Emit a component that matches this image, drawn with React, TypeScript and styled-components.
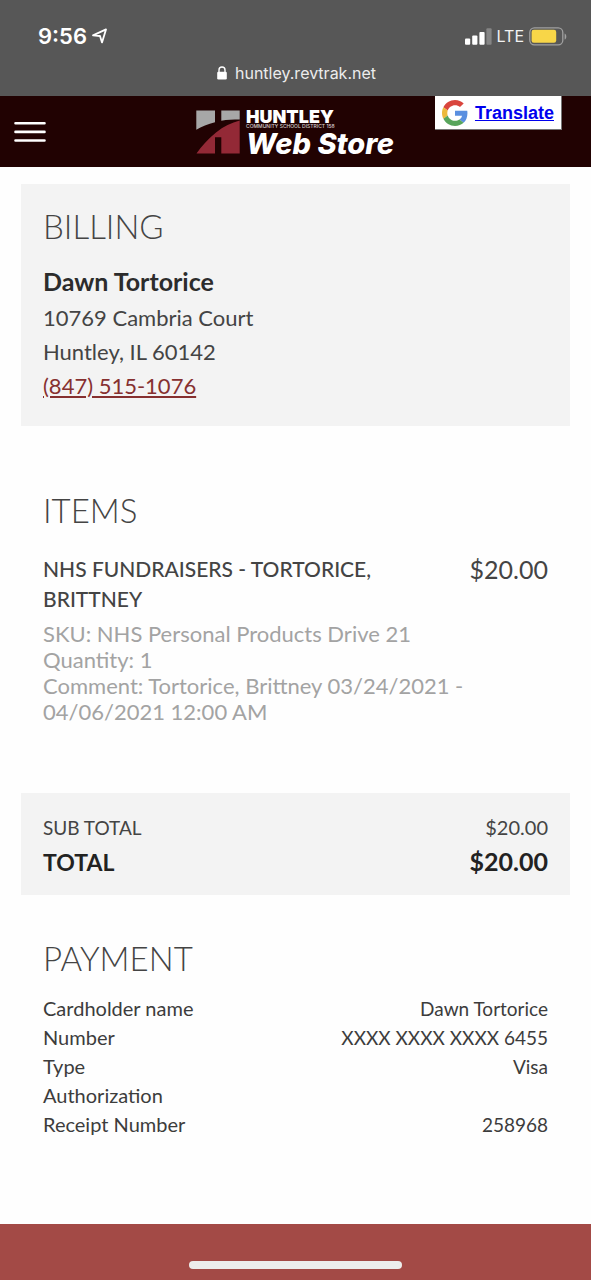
import React from "react";
import styled, { createGlobalStyle } from "styled-components";

const Global = createGlobalStyle`
  *, *::before, *::after { box-sizing: border-box; }
  body {
    margin: 0;
    background: #fefefe;
    color: #444;
    font-family: Lato, "Open Sans", sans-serif;
  }
`;

const Page = styled.div`
  display: flex;
  flex-direction: column;
  min-height: 100vh;
`;

const BrowserChrome = styled.div`
  background: #575757;
  color: #fff;
  font-family: Inter, "Liberation Sans", sans-serif;
  padding: 20px 24px 11px 38px;
`;

const StatusBar = styled.div`
  display: flex;
  justify-content: space-between;
  align-items: center;
  height: 32px;
`;

const StatusGroup = styled.div`
  display: flex;
  align-items: center;
  gap: 5px;
`;

const Clock = styled.span`
  font-size: 22px;
  font-weight: 600;
`;

const Network = styled.span`
  font-size: 16px;
  color: #f2f2f2;
`;

const AddressBar = styled.div`
  display: flex;
  justify-content: center;
  align-items: center;
  gap: 8px;
  height: 24px;
  margin-top: 9px;
  margin-right: 12px;
  font-size: 16px;
  color: #ececec;
`;

const Nav = styled.header`
  display: grid;
  grid-template-columns: 1fr auto 1fr;
  height: 71px;
  padding: 0 29px 0 14px;
  background: #210202;
`;

const MenuButton = styled.button`
  justify-self: start;
  align-self: center;
  display: flex;
  padding: 0;
  border: 0;
  background: none;
  cursor: pointer;
`;

const Brand = styled.a`
  display: flex;
  align-items: center;
  gap: 6px;
  padding-left: 14px;
  color: #fff;
  text-decoration: none;
`;

const BrandText = styled.span`
  display: flex;
  flex-direction: column;
  padding-top: 4px;
  white-space: nowrap;
`;

const BrandName = styled.span`
  font: 900 18px/15px Inter, sans-serif;
`;

const BrandDistrict = styled.span`
  font: 500 5px/5px Inter, sans-serif;
  color: #d8d0d0;
`;

const BrandStore = styled.span`
  font: italic 800 29px/29px Inter, sans-serif;
`;

const Translate = styled.a`
  justify-self: end;
  align-self: start;
  display: flex;
  align-items: center;
  gap: 7px;
  height: 34px;
  padding: 0 7px;
  border: solid #777;
  border-width: 0 1px 1px 0;
  background: #fff;
  color: #00e;
  font: bold 18px/24px "Liberation Sans", Arial, sans-serif;
`;

const Main = styled.main`
  flex: 1;
  padding: 17px 21px 84px;
`;

const Section = styled.section<{ $shaded?: boolean }>`
  padding: 22px 22px 23px;
  background: ${(p) => (p.$shaded ? "#f3f3f3" : "transparent")};
`;

const Title = styled.h2<{ $tight?: boolean }>`
  margin: 0 0 ${(p) => (p.$tight ? 16 : 18)}px;
  font-size: 33px;
  font-weight: 300;
  line-height: 40px;
  text-transform: uppercase;
`;

const PersonName = styled.h3`
  margin: 0 0 3px;
  color: #2c2c2c;
  font-size: 25px;
  font-weight: 700;
  line-height: 34px;
`;

const Address = styled.address`
  display: flex;
  flex-direction: column;
  align-items: flex-start;
  font-size: 22px;
  font-style: normal;
  line-height: 34px;
`;

const PhoneLink = styled.a`
  color: #863030;
`;

const ItemsSection = styled(Section)`
  padding: 64px 22px 68px;
`;

const Item = styled.article`
  display: grid;
  grid-template-columns: minmax(0, 1fr) auto;
  column-gap: 60px;
  padding-top: 6px;
`;

const ItemName = styled.h3`
  margin: 0;
  font-size: 21px;
  font-weight: 500;
  line-height: 30px;
  text-transform: uppercase;
`;

const ItemPrice = styled.span`
  font-size: 25px;
  font-weight: 400;
  line-height: 30px;
`;

const ItemDetails = styled.div`
  grid-column: 1 / -1;
  max-width: 440px;
  padding-top: 7px;
  color: #a3a3a3;
  font-size: 22px;
  line-height: 26px;
`;

const TotalsSection = styled(Section)`
  padding: 20px 22px 14px;
`;

const PaymentSection = styled(Section)`
  padding: 43px 22px 0;
`;

const Table = styled.table`
  width: 100%;
  border-collapse: collapse;
`;

const rowStyles = {
  subtotal: { height: 34, color: "#444", label: 19, value: 20, weight: 400 },
  total: { height: 34, color: "#222", label: 23, value: 25, weight: 700 },
  payment: { height: 29, color: "#3c3c3c", label: 20, value: 19, weight: 400 },
};

const Row = styled.tr<{ $kind: keyof typeof rowStyles }>`
  height: ${(p) => rowStyles[p.$kind].height}px;
  color: ${(p) => rowStyles[p.$kind].color};
  font-weight: ${(p) => rowStyles[p.$kind].weight};
  line-height: 28px;

  th, td { padding: 0; font-weight: inherit; vertical-align: baseline; }
  th { text-align: left; font-size: ${(p) => rowStyles[p.$kind].label}px; }
  td { text-align: right; font-size: ${(p) => rowStyles[p.$kind].value}px; }
`;

const Footer = styled.footer`
  display: flex;
  justify-content: center;
  align-items: flex-end;
  height: 56px;
  padding-bottom: 11px;
  background: #a34a46;
`;

const HomeIndicator = styled.div`
  width: 36%;
  height: 8px;
  border-radius: 4px;
  background: #ededec;
`;

const LocationIcon = () => (
  <svg width="15" height="16" viewBox="0 0 15 16" fill="none" stroke="#fff" strokeWidth="1.8" strokeLinejoin="round" aria-hidden="true">
    <path d="M1 7.4 14 1.4 10 14.4 8 8Z" />
  </svg>
);

const SignalIcon = () => (
  <svg width="27" height="17" viewBox="0 0 27 17" fill="#fff" aria-hidden="true">
    <rect x="0" y="10.5" width="5.2" height="6.2" rx="1" />
    <rect x="7.2" y="7.5" width="5.2" height="9.2" rx="1" />
    <rect x="14.4" y="4" width="5.2" height="12.7" rx="1" />
    <rect x="21.4" y="0.3" width="5.2" height="16.4" rx="1" fill="#858585" />
  </svg>
);

const BatteryIcon = () => (
  <svg width="38" height="19" viewBox="0 0 38 19" aria-hidden="true">
    <rect x="0.8" y="0.8" width="33" height="17" rx="4.6" fill="none" stroke="#a0a0a0" strokeWidth="1.3" />
    <rect x="2.6" y="2.8" width="24.6" height="13" rx="2.2" fill="#f8d648" />
    <path d="M35.6 6.4c2.3 1 2.3 5.2 0 6.2Z" fill="#a0a0a0" />
  </svg>
);

const LockIcon = () => (
  <svg width="10" height="14" viewBox="0 0 10 14" aria-hidden="true">
    <rect x="0.2" y="5.8" width="9.6" height="7.8" rx="1.3" fill="#fff" />
    <path d="M2 6.5V4a3 3 0 0 1 6 0v2.5" fill="none" stroke="#fff" strokeWidth="1.4" />
  </svg>
);

const MenuIcon = () => (
  <svg width="32" height="22" viewBox="0 0 32 22" stroke="#fff" strokeWidth="2.6" strokeLinecap="round" aria-hidden="true">
    <path d="M1.5 2.3h29M1.5 10.9h29M1.5 19.5h29" />
  </svg>
);

const HuntleyMark = () => (
  <svg width="44" height="44" viewBox="0 0 44 44" aria-hidden="true">
    <path d="M0.3 0.5H19V12.2C12 14 5.5 16.4 0.3 19.8Z" fill="#a7a7a7" />
    <path d="M25.3 0.5H43.7V9.6C37.5 9.6 31 9.8 25.3 10.7Z" fill="#a7a7a7" />
    <path d="M43.7 10.6V43.5H25.3V27.2H19V43.5H0.5C5.5 36 12 29 20 22.5C27.5 16.5 35.5 12.7 43.7 10.6Z" fill="#932936" />
  </svg>
);

const GoogleIcon = () => (
  <svg width="26" height="26" viewBox="0 0 48 48" aria-hidden="true">
    <path fill="#d9453d" d="M24 9.5c3.54 0 6.71 1.22 9.21 3.6l6.85-6.85C35.9 2.38 30.47 0 24 0 14.62 0 6.51 5.38 2.56 13.22l7.98 6.19C12.43 13.72 17.74 9.5 24 9.5z" />
    <path fill="#5a8fe0" d="M46.98 24.55c0-1.57-.15-3.09-.38-4.55H24v9.02h12.94c-.58 2.96-2.26 5.48-4.78 7.18l7.73 6c4.51-4.18 7.09-10.36 7.09-17.65z" />
    <path fill="#ecb93c" d="M10.53 28.59c-.48-1.45-.76-2.99-.76-4.59s.27-3.14.76-4.59l-7.98-6.19C.92 16.46 0 20.12 0 24c0 3.88.92 7.54 2.56 10.78l7.97-6.19z" />
    <path fill="#58a55c" d="M24 48c6.48 0 11.93-2.13 15.89-5.81l-7.73-6c-2.15 1.45-4.92 2.3-8.16 2.3-6.26 0-11.57-4.22-13.47-9.91l-7.98 6.19C6.51 42.62 14.62 48 24 48z" />
  </svg>
);

const payment = [
  ["Cardholder name", "Dawn Tortorice"],
  ["Number", "XXXX XXXX XXXX 6455"],
  ["Type", "Visa"],
  ["Authorization", ""],
  ["Receipt Number", "258968"],
];

export default function App() {
  return (
    <Page>
      <Global />
      <BrowserChrome>
        <StatusBar>
          <StatusGroup>
            <Clock>9:56</Clock>
            <LocationIcon />
          </StatusGroup>
          <StatusGroup>
            <SignalIcon />
            <Network>LTE</Network>
            <BatteryIcon />
          </StatusGroup>
        </StatusBar>
        <AddressBar>
          <LockIcon />
          <span>huntley.revtrak.net</span>
        </AddressBar>
      </BrowserChrome>

      <Nav>
        <MenuButton type="button" aria-label="Menu">
          <MenuIcon />
        </MenuButton>
        <Brand href="#">
          <HuntleyMark />
          <BrandText>
            <BrandName>HUNTLEY</BrandName>
            <BrandDistrict>COMMUNITY SCHOOL DISTRICT 158</BrandDistrict>
            <BrandStore>Web Store</BrandStore>
          </BrandText>
        </Brand>
        <Translate href="#">
          <GoogleIcon />
          Translate
        </Translate>
      </Nav>

      <Main>
        <Section $shaded>
          <Title>Billing</Title>
          <PersonName>Dawn Tortorice</PersonName>
          <Address>
            <span>10769 Cambria Court</span>
            <span>Huntley, IL 60142</span>
            <PhoneLink href="tel:+18475151076">(847) 515-1076</PhoneLink>
          </Address>
        </Section>

        <ItemsSection>
          <Title>Items</Title>
          <Item>
            <ItemName>NHS Fundraisers - Tortorice, Brittney</ItemName>
            <ItemPrice>$20.00</ItemPrice>
            <ItemDetails>
              <div>SKU: NHS Personal Products Drive 21</div>
              <div>Quantity: 1</div>
              <div>Comment: Tortorice, Brittney 03/24/2021 - 04/06/2021 12:00 AM</div>
            </ItemDetails>
          </Item>
        </ItemsSection>

        <TotalsSection $shaded>
          <Table>
            <tbody>
              <Row $kind="subtotal">
                <th scope="row">SUB TOTAL</th>
                <td>$20.00</td>
              </Row>
              <Row $kind="total">
                <th scope="row">TOTAL</th>
                <td>$20.00</td>
              </Row>
            </tbody>
          </Table>
        </TotalsSection>

        <PaymentSection>
          <Title $tight>Payment</Title>
          <Table>
            <tbody>
              {payment.map(([label, value]) => (
                <Row $kind="payment" key={label}>
                  <th scope="row">{label}</th>
                  <td>{value}</td>
                </Row>
              ))}
            </tbody>
          </Table>
        </PaymentSection>
      </Main>

      <Footer>
        <HomeIndicator />
      </Footer>
    </Page>
  );
}
